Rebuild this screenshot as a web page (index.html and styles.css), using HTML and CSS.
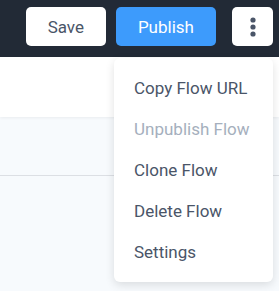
FILE: index.html
```html
<!DOCTYPE html>
<html lang="en">
<head>
    <meta charset="UTF-8">
    <title>Flow Editor</title>
    <link rel="stylesheet" href="styles.css">
</head>
<body>
    <div class="topbar">
        <button class="btn btn-save">Save</button>
        <button class="btn btn-publish">Publish</button>
        <button class="btn btn-more" aria-label="More">
            <svg viewBox="0 0 6 20" width="6" height="20">
                <circle cx="3" cy="3" r="2.6" fill="currentColor" />
                <circle cx="3" cy="10" r="2.6" fill="currentColor" />
                <circle cx="3" cy="17" r="2.6" fill="currentColor" />
            </svg>
        </button>
    </div>

    <div class="toolbar"></div>
    <div class="section"></div>
    <div class="canvas"></div>

    <ul class="dropdown">
        <li class="dropdown-item">Copy Flow URL</li>
        <li class="dropdown-item disabled">Unpublish Flow</li>
        <li class="dropdown-item">Clone Flow</li>
        <li class="dropdown-item">Delete Flow</li>
        <li class="dropdown-item">Settings</li>
    </ul>
</body>
</html>
```

FILE: styles.css
```css
:root {
    --header-bg: #222a36;
    --primary-color: #3d9bfc;
    --text-color: #4a5568;
    --muted-color: #a5afbd;
    --page-bg: #f7fafd;
}

* {
    margin: 0;
    padding: 0;
    box-sizing: border-box;
}

body {
    font-family: Roboto, "Liberation Sans", sans-serif;
    background-color: var(--page-bg);
    color: var(--text-color);
    position: relative;
    overflow: hidden;
    height: 291px;
}

.topbar {
    height: 57px;
    background-color: var(--header-bg);
    display: flex;
    align-items: center;
    padding: 0 6px 4px 26px;
    gap: 10px;
}

.btn {
    height: 39px;
    border: none;
    border-radius: 5px;
    font-family: inherit;
    font-size: 17px;
    cursor: pointer;
    display: flex;
    align-items: center;
    justify-content: center;
}

.btn-save {
    width: 80px;
    background: white;
    color: var(--text-color);
}

.btn-publish {
    width: 101px;
    background: var(--primary-color);
    color: white;
}

.btn-more {
    width: 41px;
    margin-left: 6px;
    background: white;
    color: #4a5568;
}

.toolbar {
    height: 60px;
    background: white;
    box-shadow: 0 1px 3px rgba(0, 0, 0, 0.06);
}

.section {
    height: 59px;
    border-bottom: 1px solid #dcdfe4;
}

.canvas {
    height: 115px;
}

.dropdown {
    position: absolute;
    top: 58px;
    left: 114px;
    width: 159px;
    list-style: none;
    background: white;
    border-radius: 6px;
    box-shadow: 0 3px 10px rgba(0, 0, 0, 0.12);
    padding: 10px 0 9px;
}

.dropdown-item {
    padding: 0 20px;
    height: 41px;
    line-height: 41px;
    font-size: 17px;
    white-space: nowrap;
    cursor: pointer;
}

.dropdown-item.disabled {
    color: var(--muted-color);
    cursor: default;
}
```
